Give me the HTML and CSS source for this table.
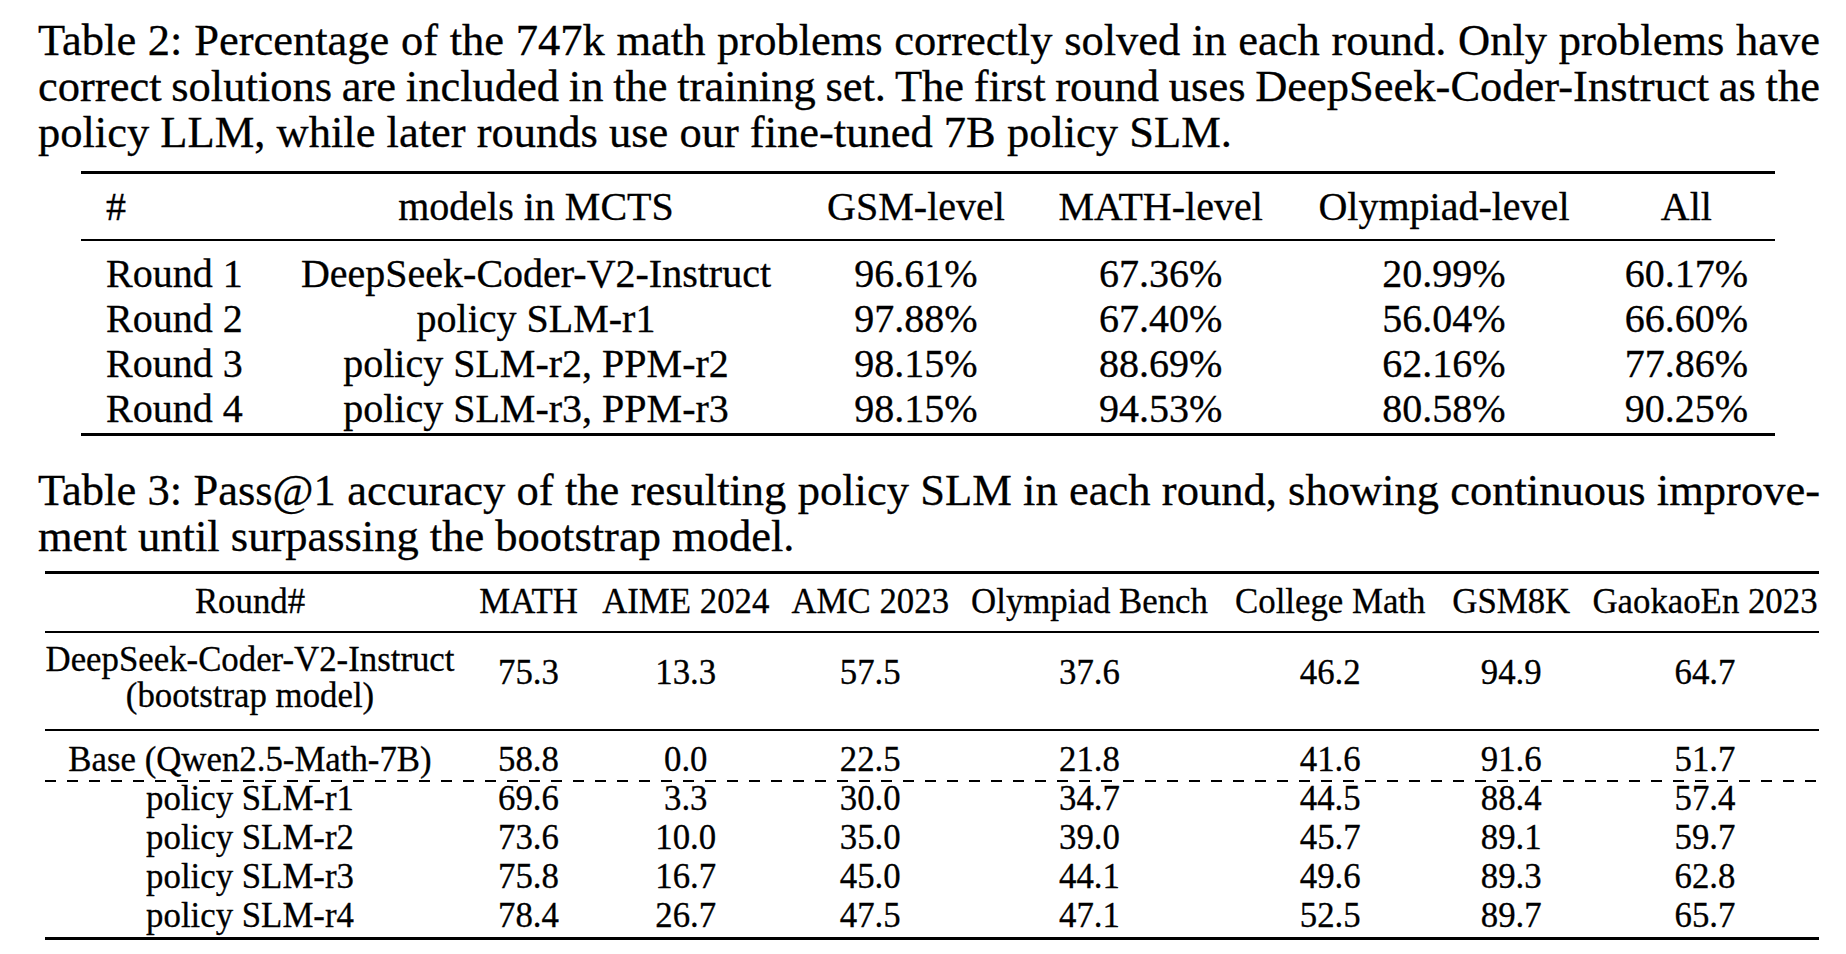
FILE: index.html
```html
<!DOCTYPE html>
<html>
<head>
<meta charset="utf-8">
<title>Tables</title>
<link rel="stylesheet" href="styles.css">
</head>
<body>
<div class="page">
  <div class="caption cap2">
    <span class="cl">Table 2: Percentage of the 747k math problems correctly solved in each round. Only problems have</span>
    <span class="cl">correct solutions are included in the training set. The first round uses DeepSeek-Coder-Instruct as the</span>
    <span class="cl last">policy LLM, while later rounds use our fine-tuned 7B policy SLM.</span>
  </div>

  <div class="t2">
    <div class="t2-row t2-head">
      <div>#</div><div>models in MCTS</div><div>GSM-level</div><div>MATH-level</div><div>Olympiad-level</div><div>All</div>
    </div>
    <div class="t2-body">
      <div class="t2-row"><div>Round 1</div><div>DeepSeek-Coder-V2-Instruct</div><div>96.61%</div><div>67.36%</div><div>20.99%</div><div>60.17%</div></div>
      <div class="t2-row"><div>Round 2</div><div>policy SLM-r1</div><div>97.88%</div><div>67.40%</div><div>56.04%</div><div>66.60%</div></div>
      <div class="t2-row"><div>Round 3</div><div>policy SLM-r2, PPM-r2</div><div>98.15%</div><div>88.69%</div><div>62.16%</div><div>77.86%</div></div>
      <div class="t2-row"><div>Round 4</div><div>policy SLM-r3, PPM-r3</div><div>98.15%</div><div>94.53%</div><div>80.58%</div><div>90.25%</div></div>
    </div>
  </div>

  <div class="caption cap3">
    <span class="cl">Table 3: Pass@1 accuracy of the resulting policy SLM in each round, showing continuous improve-</span>
    <span class="cl last">ment until surpassing the bootstrap model.</span>
  </div>

  <div class="t3">
    <div class="t3-row t3-head">
      <div>Round#</div><div>MATH</div><div>AIME 2024</div><div>AMC 2023</div><div>Olympiad Bench</div><div>College Math</div><div>GSM8K</div><div>GaokaoEn 2023</div>
    </div>
    <div class="t3-row t3-boot">
      <div class="two">DeepSeek-Coder-V2-Instruct<br>(bootstrap model)</div><div>75.3</div><div>13.3</div><div>57.5</div><div>37.6</div><div>46.2</div><div>94.9</div><div>64.7</div>
    </div>
    <div class="t3-row t3-base">
      <div>Base (Qwen2.5-Math-7B)</div><div>58.8</div><div>0.0</div><div>22.5</div><div>21.8</div><div>41.6</div><div>91.6</div><div>51.7</div>
    </div>
    <div class="dash"></div>
    <div class="t3-body">
      <div class="t3-row"><div>policy SLM-r1</div><div>69.6</div><div>3.3</div><div>30.0</div><div>34.7</div><div>44.5</div><div>88.4</div><div>57.4</div></div>
      <div class="t3-row"><div>policy SLM-r2</div><div>73.6</div><div>10.0</div><div>35.0</div><div>39.0</div><div>45.7</div><div>89.1</div><div>59.7</div></div>
      <div class="t3-row"><div>policy SLM-r3</div><div>75.8</div><div>16.7</div><div>45.0</div><div>44.1</div><div>49.6</div><div>89.3</div><div>62.8</div></div>
      <div class="t3-row"><div>policy SLM-r4</div><div>78.4</div><div>26.7</div><div>47.5</div><div>47.1</div><div>52.5</div><div>89.7</div><div>65.7</div></div>
    </div>
  </div>
</div>
</body>
</html>
```

FILE: styles.css
```css
html, body {
  margin: 0;
  padding: 0;
  background: #ffffff;
}

body {
  font-family: "Liberation Serif", "Times New Roman", serif;
  color: #000000;
  width: 1846px;
  height: 954px;
  overflow: hidden;
  -webkit-text-stroke: 0.3px #000;
}

.page {
  padding-top: 17.3px;
}

/* captions */
.caption {
  margin-left: 38px;
  width: 1782px;
  font-size: 44.5px;
  line-height: 46px;
}

.cl {
  display: block;
  text-align: justify;
  text-align-last: justify;
  word-spacing: -3.5px;
}

.cl.last {
  text-align-last: left;
  word-spacing: 0;
}

.cap3 {
  margin-top: 30.5px;
}

/* Table 2 */
.t2 {
  margin: 15.7px 0 0 81px;
  width: 1694px;
  font-size: 40px;
  line-height: 45px;
  border-top: 3px solid #000;
  border-bottom: 3px solid #000;
}

.t2-row {
  display: grid;
  grid-template-columns: 190px 530px 230px 259.2px 307.6px 177.2px;
  text-align: center;
  white-space: nowrap;
}

.t2-row > :first-child {
  text-align: left;
  padding-left: 25px;
}

.t2-head {
  padding: 10px 0;
  border-bottom: 2px solid #000;
}

.t2-body {
  padding: 10px 0 2.5px;
}

/* Table 3 */
.t3 {
  margin: 12px 0 0 45px;
  width: 1774px;
  font-size: 34.8px;
  line-height: 39px;
  border-top: 3px solid #000;
  border-bottom: 3px solid #000;
}

.t3-row {
  display: grid;
  grid-template-columns: 422px 123px 191.5px 177.5px 261px 220.5px 141.5px 237px;
  text-align: center;
  align-items: start;
  white-space: nowrap;
}

.t3-row > :first-child {
  padding-right: 12px;
}

.t3-row > :last-child {
  padding-left: 9px;
}

.t3-head {
  padding: 8.1px 0 9.6px;
  border-bottom: 2px solid #000;
}

.t3-boot {
  border-bottom: 2px solid #000;
}

.t3-boot > div {
  padding-top: 20.5px;
}

.t3-boot > .two {
  line-height: 36.6px;
  padding-top: 8.96px;
  padding-bottom: 14.14px;
}

.t3-base {
  padding: 8.75px 0 1.25px;
}

.dash {
  height: 1.6px;
  background: repeating-linear-gradient(to right, #000 0 11px, transparent 11px 22px);
}

.t3-body {
  margin-top: -2.35px;
  padding-bottom: 1.6px;
}
```
